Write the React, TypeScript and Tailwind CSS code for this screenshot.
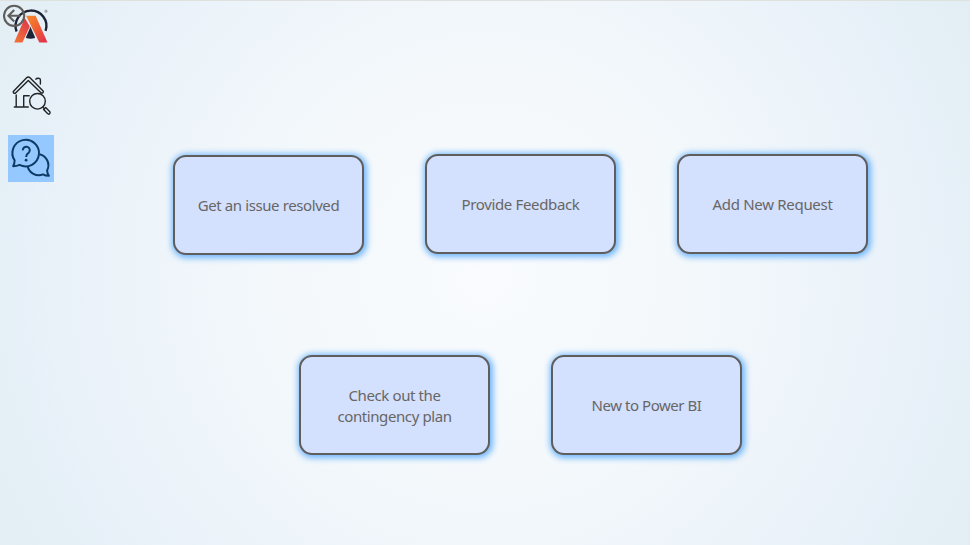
import type { ReactNode } from "react";

function BackIcon() {
  return (
    <svg className="absolute left-[3px] top-[3px] size-6" viewBox="3 3 24 24" fill="none" stroke="#605e5c" strokeWidth="2.1">
      <circle cx="14.1" cy="15.8" r="10.1" />
      <path d="M20.4 15.8H8.4M14.2 10L8.4 15.8L14.2 21.6" />
    </svg>
  );
}

function Logo() {
  return (
    <svg className="block h-[50px] w-[60px]" viewBox="0 0 60 50">
      <defs>
        <linearGradient id="rightLeg" x1="0" y1="0" x2="0.8" y2="1">
          <stop offset="0" stopColor="#f58a2b" />
          <stop offset="0.5" stopColor="#ef6333" />
          <stop offset="1" stopColor="#e2344a" />
        </linearGradient>
        <linearGradient id="leftLeg" x1="0.7" y1="0" x2="0.2" y2="1">
          <stop offset="0" stopColor="#e0384b" />
          <stop offset="1" stopColor="#f27135" />
        </linearGradient>
      </defs>
      <path d="M16.6 31.5A15.4 15.4 0 1 1 45.6 30.8" fill="none" stroke="#1e2335" strokeWidth="2.4" />
      <path d="M24.8 18L29.8 26.5L22.4 42.4H14.2Z" fill="url(#leftLeg)" />
      <path d="M26 15.7H35.6L47.5 42.4H39.3L30.4 24.5Z" fill="url(#rightLeg)" />
      <path d="M25.3 15.6L31 27.2" stroke="#f3dfe0" strokeWidth="0.5" />
      <path d="M30.5 26.8L34.8 36.8L35 38Q30.5 39.4 26 38L26.2 36.8Z" fill="#1e2335" />
      <circle cx="46" cy="11.2" r="1.2" fill="#b4b9c0" stroke="#8e949e" strokeWidth="0.7" />
    </svg>
  );
}

function HomeSearchIcon() {
  return (
    <svg className="block size-[60px]" viewBox="0 65 60 60" fill="none" stroke="#202426" strokeWidth="1.4" strokeLinecap="round" strokeLinejoin="round">
      <path d="M13.3 91.5L26.6 77.7Q28.3 76.2 30 77.7L43.3 91.2Q43.6 93.3 41.2 93L28.3 80.4L15.3 93.3Q12.9 93.5 13.3 91.5Z" />
      <path d="M35.8 79.2Q36.2 78.3 38.2 78.3Q40.5 78.3 40.4 80.2V84" />
      <path d="M16.2 95V106.7M14.3 107H28.3M23.7 106.7V95.7H29.2" />
      <circle cx="37.5" cy="101.3" r="7.8" />
      <path d="M42.8 107.2L44.6 109M43.6 109.6L45.7 107.6L49.8 111.7Q50.6 113.2 49.5 113.9Q48.5 114.6 47.5 113.6Z" />
    </svg>
  );
}

function HelpChatIcon() {
  return (
    <svg className="block h-[47px] w-[46px]" viewBox="8 135 46 47" fill="none" stroke="#0d3b66" strokeWidth="2" strokeLinejoin="round">
      <path d="M14.6 160.4A13.3 13.3 0 1 1 19.6 164.9Q16.6 166.2 13.2 166.2Q14.6 163.5 14.6 160.4Z" />
      <path d="M39.6 154.2A11.4 11.4 0 0 1 47.1 170.5Q47.2 173.4 48.9 175.8Q45.6 175.9 43 174.4A11.4 11.4 0 0 1 27.6 166" />
      <path d="M22.8 150.4A3.5 3.5 0 1 1 28.8 152.6Q26.3 154.2 26.1 157" />
      <circle cx="26.1" cy="160.2" r="1.4" fill="#0d3b66" stroke="none" />
    </svg>
  );
}

function Card({ children, className = "" }: { children: ReactNode; className?: string }) {
  return (
    <button
      className={`flex h-[100px] w-[191px] items-center justify-center rounded-[13px] border-2 border-[#605e5c] bg-[#d3e0fe] text-center font-['Noto_Sans',sans-serif] text-[15px] leading-[21px] text-[#686664] shadow-[1px_1px_6px_1.5px_#6db5fb] ${className}`}
    >
      {children}
    </button>
  );
}

export default function App() {
  return (
    <div className="h-[545px] w-[973px] overflow-hidden bg-white">
      <div className="flex h-full w-[970px] border-t border-[#dfe1df] bg-[radial-gradient(circle_at_50%_50%,#f9fbfe_0%,#f3f8fb_40%,#e9f1f9_78%,#e2eef4_100%)]">
        <nav className="relative -mt-px flex w-[60px] flex-col">
          <Logo />
          <BackIcon />
          <div className="mt-[15px]">
            <HomeSearchIcon />
          </div>
          <div className="ml-2 mt-[10px] h-[47px] w-[46px] bg-[#94c8fe]">
            <HelpChatIcon />
          </div>
        </nav>
        <main className="flex flex-1 flex-col pl-[113px] pt-[153px]">
          <div className="flex gap-[61px]">
            <Card className="mt-px tracking-[-0.4px]">Get an issue resolved</Card>
            <Card className="tracking-[-0.35px]">Provide Feedback</Card>
            <Card className="tracking-[-0.3px]">Add New Request</Card>
          </div>
          <div className="mt-[100px] flex gap-[61px] pl-[126px]">
            <Card className="pt-[2px] tracking-[-0.4px]">
              Check out the
              <br />
              contingency plan
            </Card>
            <Card className="tracking-[-0.45px]">New to Power BI</Card>
          </div>
        </main>
      </div>
    </div>
  );
}
